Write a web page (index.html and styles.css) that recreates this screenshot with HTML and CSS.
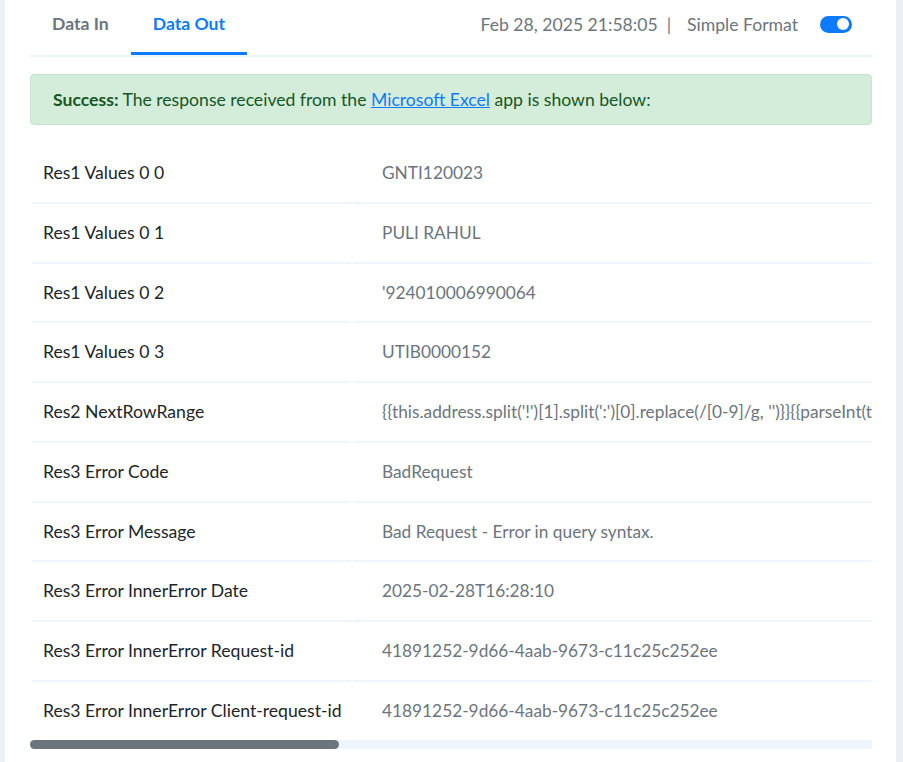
FILE: index.html
```html
<!DOCTYPE html>
<html lang="en">
<head>
    <meta charset="UTF-8">
    <meta name="viewport" content="width=device-width, initial-scale=1.0">
    <title>Data Out</title>
    <link rel="stylesheet" href="styles.css">
</head>
<body>
    <div class="panel">
        <div class="header">
            <div class="tab">Data In</div>
            <div class="tab active">Data Out</div>
            <div class="meta">
                <span>Feb 28, 2025 21:58:05</span>
                <span class="sep">|</span>
                <span>Simple Format</span>
                <span class="toggle"><span class="knob"></span></span>
            </div>
        </div>

        <div class="alert">
            <b>Success:</b> The response received from the <a href="#">Microsoft Excel</a> app is shown below:
        </div>

        <div class="table-wrap">
            <table class="data">
                <tr><td class="key">Res1 Values 0 0</td><td class="val">GNTI120023</td></tr>
                <tr><td class="key">Res1 Values 0 1</td><td class="val">PULI RAHUL</td></tr>
                <tr><td class="key">Res1 Values 0 2</td><td class="val">'924010006990064</td></tr>
                <tr><td class="key">Res1 Values 0 3</td><td class="val">UTIB0000152</td></tr>
                <tr><td class="key">Res2 NextRowRange</td><td class="val">{{this.address.split('!')[1].split(':')[0].replace(/[0-9]/g, '')}}{{parseInt(this.address.split('!')[1].split(':')[1].replace(/[A-Z]/g, '')) + 1}}</td></tr>
                <tr><td class="key">Res3 Error Code</td><td class="val">BadRequest</td></tr>
                <tr><td class="key">Res3 Error Message</td><td class="val">Bad Request - Error in query syntax.</td></tr>
                <tr><td class="key">Res3 Error InnerError Date</td><td class="val">2025-02-28T16:28:10</td></tr>
                <tr><td class="key">Res3 Error InnerError Request-id</td><td class="val">41891252-9d66-4aab-9673-c11c25c252ee</td></tr>
                <tr><td class="key">Res3 Error InnerError Client-request-id</td><td class="val">41891252-9d66-4aab-9673-c11c25c252ee</td></tr>
            </table>
        </div>
        <div class="scroll-track"><div class="scroll-thumb"></div></div>
    </div>
</body>
</html>
```

FILE: styles.css
```css
body {
    margin: 0;
    background: #eceff3;
    font-family: Lato, "Open Sans", sans-serif;
    font-size: 17.6px;
}

.panel {
    background: #fff;
    margin: 0 7px 0 5px;
    min-height: 100vh;
    padding: 0 24px 0 25px;
    box-sizing: border-box;
}

.header {
    display: flex;
    height: 57px;
    border-bottom: 2px solid #eef5fd;
    box-sizing: border-box;
}

.tab {
    padding: 0 22px;
    height: 55px;
    line-height: 47px;
    font-weight: 700;
    color: #6c757d;
    border-bottom: 3px solid transparent;
    box-sizing: border-box;
}

.tab.active {
    color: #0d7bff;
    border-bottom-color: #0d7bff;
}

.meta {
    margin-left: auto;
    display: flex;
    align-items: center;
    height: 48px;
    padding-right: 20px;
    color: #6c757d;
}

.sep {
    margin: 0 16px 0 9px;
}

.toggle {
    position: relative;
    width: 32px;
    height: 17px;
    margin-left: 22px;
    border-radius: 9px;
    background: #0d7bff;
}

.knob {
    position: absolute;
    top: 2.5px;
    right: 3px;
    width: 12px;
    height: 12px;
    border-radius: 50%;
    background: #fff;
}

.alert {
    margin-top: 17px;
    padding: 11.5px 22px;
    line-height: 26px;
    color: #155724;
    background: #d4edda;
    border: 1px solid #c3e6cb;
    border-radius: 4px;
}

.alert a {
    color: #0d7bff;
}

.table-wrap {
    margin-top: 19px;
    overflow: hidden;
}

.data {
    table-layout: fixed;
    width: 2296px;
    border-collapse: separate;
    border-spacing: 2px 0;
    white-space: nowrap;
}

.data td {
    box-sizing: border-box;
    padding: 16px 0 15.75px;
    line-height: 26px;
    border-bottom: 2px solid #eef5fd;
    overflow: hidden;
}

.data tr:last-child td {
    border-bottom: none;
    padding-bottom: 15.75px;
}

.key {
    width: 319px;
    padding-left: 11px !important;
    color: #212529;
}

.val {
    padding-left: 29px !important;
    font-size: 17.3px;
    color: #6c757d;
}

.scroll-track {
    height: 9px;
    background: #eef5fd;
}

.scroll-thumb {
    width: 309px;
    height: 9px;
    border-radius: 5px;
    background: #6c757d;
}
```
